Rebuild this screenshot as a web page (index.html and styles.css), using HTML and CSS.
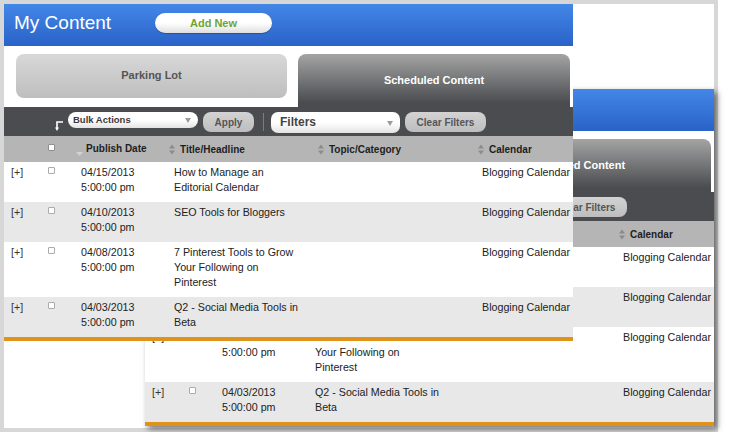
FILE: index.html
```html
<!DOCTYPE html>
<html lang="en">
<head>
    <meta charset="UTF-8">
    <title>My Content</title>
    <link rel="stylesheet" href="styles.css">
</head>
<body>
    <div class="desk" id="desk">
        <div class="window front">
            <div class="win-head">
                <h1>My Content</h1>
                <button class="add-btn">Add New</button>
            </div>

            <div class="tabs">
                <div class="tab tab-off">Parking Lot</div>
                <div class="tab tab-on">Scheduled Content</div>
            </div>

            <div class="toolbar">
                <svg class="bulk-arrow" width="8" height="10" viewBox="0 0 8 10">
                    <path d="M8 1H2V7" stroke="#fff" stroke-width="1.6" fill="none"/>
                    <path d="M0 6.5H4L2 10Z" fill="#fff"/>
                </svg>
                <div class="select bulk">Bulk Actions <span class="caret"></span></div>
                <button class="gray-btn apply">Apply</button>
                <span class="sep"></span>
                <div class="select filters">Filters <span class="caret"></span></div>
                <button class="gray-btn clear">Clear Filters</button>
            </div>

            <table class="grid">
                <colgroup>
                    <col style="width:40px">
                    <col style="width:32px">
                    <col style="width:93px">
                    <col style="width:149px">
                    <col style="width:160px">
                    <col style="width:95px">
                </colgroup>
                <thead>
                    <tr>
                        <th></th>
                        <th class="chk-cell"><span class="chk head-chk"></span></th>
                        <th><svg class="sort-desc" width="7" height="4" viewBox="0 0 7 4"><path d="M0 0H7L3.5 4Z" fill="#d2d2d2"/></svg>Publish Date</th>
                        <th><svg class="sort" width="6" height="11" viewBox="0 0 6 11"><path d="M0 4.5L3 0.5L6 4.5Z M0 6.5L3 10.5L6 6.5Z" fill="#8b8b8b"/></svg>Title/Headline</th>
                        <th><svg class="sort" width="6" height="11" viewBox="0 0 6 11"><path d="M0 4.5L3 0.5L6 4.5Z M0 6.5L3 10.5L6 6.5Z" fill="#8b8b8b"/></svg>Topic/Category</th>
                        <th><svg class="sort" width="6" height="11" viewBox="0 0 6 11"><path d="M0 4.5L3 0.5L6 4.5Z M0 6.5L3 10.5L6 6.5Z" fill="#8b8b8b"/></svg>Calendar</th>
                    </tr>
                </thead>
                <tbody>
                    <tr>
                        <td class="expand">[+]</td>
                        <td class="chk-cell"><span class="chk"></span></td>
                        <td>04/15/2013<br>5:00:00 pm</td>
                        <td>How to Manage an<br>Editorial Calendar</td>
                        <td></td>
                        <td class="cal">Blogging Calendar</td>
                    </tr>
                    <tr>
                        <td class="expand">[+]</td>
                        <td class="chk-cell"><span class="chk"></span></td>
                        <td>04/10/2013<br>5:00:00 pm</td>
                        <td>SEO Tools for Bloggers</td>
                        <td></td>
                        <td class="cal">Blogging Calendar</td>
                    </tr>
                    <tr>
                        <td class="expand">[+]</td>
                        <td class="chk-cell"><span class="chk"></span></td>
                        <td>04/08/2013<br>5:00:00 pm</td>
                        <td>7 Pinterest Tools to Grow<br>Your Following on<br>Pinterest</td>
                        <td></td>
                        <td class="cal">Blogging Calendar</td>
                    </tr>
                    <tr>
                        <td class="expand">[+]</td>
                        <td class="chk-cell"><span class="chk"></span></td>
                        <td>04/03/2013<br>5:00:00 pm</td>
                        <td>Q2 - Social Media Tools in<br>Beta</td>
                        <td></td>
                        <td class="cal">Blogging Calendar</td>
                    </tr>
                </tbody>
            </table>

            <div class="win-foot"></div>
        </div>
    </div>

    <script>
        // second copy of the same window, sitting behind the first one
        const front = document.querySelector('.window.front');
        const back = front.cloneNode(true);
        back.className = 'window back';
        front.parentNode.insertBefore(back, front);

        // parts of the back window that the front one hides completely
        const box = front.getBoundingClientRect();
        back.querySelectorAll('h1, button, .tab, .select, th, td').forEach(el => {
            const r = el.getBoundingClientRect();
            if (r.right <= box.right && r.bottom <= box.bottom) {
                el.classList.add('covered');
            }
        });
    </script>
</body>
</html>
```

FILE: styles.css
```css
* {
    box-sizing: border-box;
}

body {
    margin: 0;
    background: #fff;
    font-family: 'Liberation Sans', Arial, sans-serif;
}

.desk {
    position: relative;
    width: 718px;
    height: 432px;
    border: 4px solid #d7d7d7;
    background: #fff;
}

.window {
    position: absolute;
    width: 569px;
    height: 337px;
    background: #fff;
    overflow: hidden;
}

.window.front {
    left: 0;
    top: 0;
}

.window.back {
    left: 141px;
    top: 85px;
    box-shadow: 3px 3px 6px rgba(0,0,0,0.55);
}

.covered {
    visibility: hidden;
}

/* blue title bar */
.win-head {
    display: flex;
    align-items: center;
    height: 42px;
    padding: 0 0 4px 10px;
    background: linear-gradient(#4387e7, #2a62c8);
}

.win-head h1 {
    margin: 0;
    width: 141px;
    font-size: 19px;
    font-weight: normal;
    color: #fff;
}

.add-btn {
    width: 117px;
    height: 20px;
    padding: 0;
    border: none;
    border-radius: 10px;
    background: linear-gradient(#fff 50%, #dedede);
    box-shadow: 0 1px 1px rgba(0,0,0,0.25);
    color: #6ea434;
    font: bold 11px 'Liberation Sans', Arial, sans-serif;
}

/* tabs */
.tabs {
    display: flex;
    align-items: flex-start;
    gap: 11px;
    height: 61px;
    padding: 8px 3px 0 12px;
}

.tab {
    font-size: 11px;
    font-weight: bold;
    text-align: center;
}

.tab-off {
    width: 271px;
    height: 44px;
    line-height: 43px;
    border-radius: 8px;
    background: linear-gradient(#d8d8d8, #bebebe);
    color: #555;
}

.tab-on {
    flex: 1;
    height: 53px;
    padding-top: 20px;
    border-radius: 8px 8px 0 0;
    background: linear-gradient(#a4a4a4, #4a4c4f 92%);
    color: #fff;
}

/* toolbar */
.toolbar {
    display: flex;
    align-items: flex-start;
    height: 29px;
    padding: 5px 0 0 51px;
    background: #4a4c4f;
}

.bulk-arrow {
    margin-top: 9px;
}

.select {
    position: relative;
    font-weight: bold;
    color: #3a3a3a;
    background: linear-gradient(#fff 50%, #e3e3e3);
}

.select .caret {
    position: absolute;
    top: 50%;
    margin-top: -2px;
    width: 0;
    height: 0;
    border-left: 3px solid transparent;
    border-right: 3px solid transparent;
    border-top: 5px solid #9c9c9c;
}

.bulk {
    width: 130px;
    height: 16px;
    margin-left: 5px;
    padding-left: 5px;
    border-radius: 8px;
    font-size: 9.5px;
    line-height: 15px;
}

.bulk .caret {
    right: 7px;
}

.filters {
    width: 129px;
    height: 21px;
    margin-left: 7px;
    padding-left: 9px;
    border-radius: 7px;
    font-size: 12px;
    line-height: 21px;
    color: #444;
}

.filters .caret {
    right: 7px;
}

.gray-btn {
    height: 20px;
    padding: 0;
    border: none;
    border-radius: 8px;
    background: linear-gradient(#d3d3d3, #bdbdbd);
    color: #555;
    font: bold 10px 'Liberation Sans', Arial, sans-serif;
}

.apply {
    width: 51px;
    margin-left: 5px;
}

.clear {
    width: 81px;
    margin-left: 5px;
}

.sep {
    width: 1px;
    height: 18px;
    margin: 1px 0 0 9px;
    background: #7a7c7f;
}

/* table */
.grid {
    width: 569px;
    border-collapse: collapse;
    table-layout: fixed;
    font-size: 10.7px;
    color: #222;
}

.grid th {
    height: 26px;
    padding: 0;
    background: #b5b5b5;
    text-align: left;
    font-size: 10px;
    font-weight: bold;
    color: #1e1e1e;
    white-space: nowrap;
}

.grid td {
    padding: 3px 4px 7px 5px;
    line-height: 15px;
    vertical-align: top;
    white-space: nowrap;
}

.grid tbody tr:nth-child(even) td {
    background: #e8e8e8;
}

.grid td.expand {
    padding-left: 7px;
    color: #333;
}

.grid .chk-cell {
    padding-left: 4px;
}

.grid td.cal {
    padding-left: 4px;
}

.chk {
    display: block;
    width: 7px;
    height: 7px;
    margin-top: 2px;
    border: 1px solid #ababab;
    border-radius: 1px;
    background: #fff;
}

.head-chk {
    margin-top: -3px;
    border-color: #8e8e8e;
}

.sort {
    vertical-align: -2px;
    margin-right: 5px;
}

.sort-desc {
    vertical-align: -4px;
    margin-right: 3px;
}

.win-foot {
    height: 4px;
    background: #df931a;
}
```
